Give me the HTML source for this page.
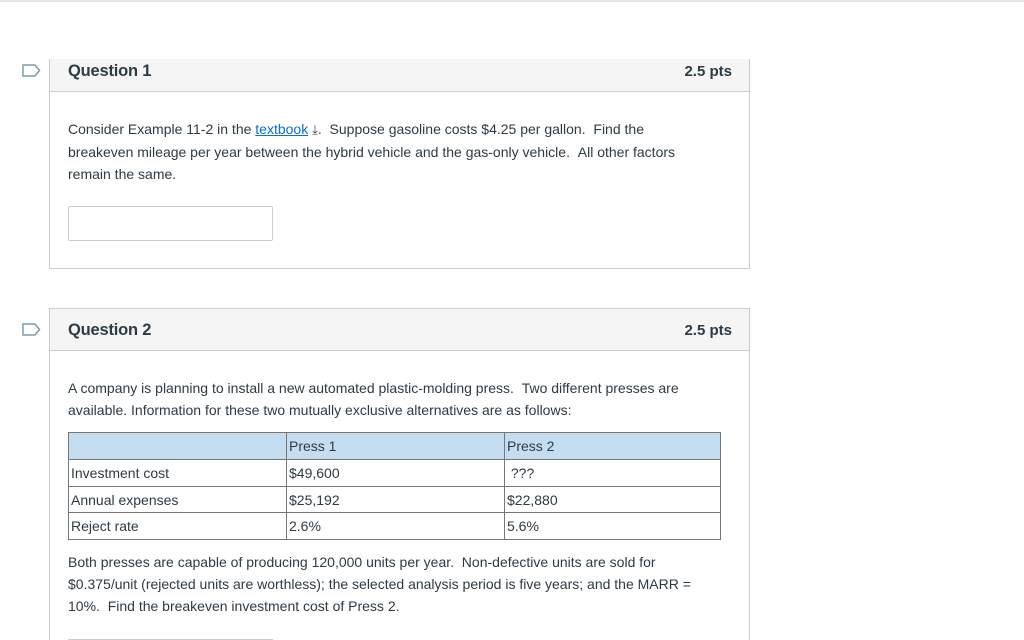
<!DOCTYPE html>
<html style="height:640px;overflow:hidden"><head><style>
body{margin:0;width:1024px;height:640px;overflow:hidden;background:#fff;font-family:"Liberation Sans",sans-serif;color:#2d3b45;position:relative}
.topline{position:absolute;left:0;top:0;width:1024px;height:2px;background:#e6e6e6}
.box{position:absolute;left:49px;width:699px;border:1px solid #c7cdd1;border-top:none}
.hdr{height:32px;background:#f5f5f5;border-bottom:1px solid #c7cdd1;position:relative}
.hdr .t{position:absolute;left:18px;top:2px;font-size:16.5px;font-weight:bold;letter-spacing:-0.2px}
.hdr .p{position:absolute;right:17px;top:3px;font-size:15px;font-weight:bold}
.txt{position:absolute;left:18px;font-size:14px;line-height:22px;white-space:nowrap}
.flag{position:absolute;left:22px;width:19px;height:13px}
a{color:#0770d6}
table{position:absolute;left:18px;border-collapse:collapse;font-size:14px}
td{border:1px solid #777;height:25px;padding:0 2px;vertical-align:middle;box-sizing:border-box}
</style></head><body>
<div class="topline"></div>
<svg class="flag" style="top:64px" viewBox="0 0 19 13"><path d="M1 1H13L17.5 6.5L13 12H1Z" fill="none" stroke="#7a9bb5" stroke-width="1.5"/></svg>
<svg class="flag" style="top:323px" viewBox="0 0 19 13"><path d="M1 1H13L17.5 6.5L13 12H1Z" fill="none" stroke="#7a9bb5" stroke-width="1.5"/></svg>
<div class="box" style="top:59px;height:209px">
 <div class="hdr"><span class="t" style="top:3px">Question 1</span><span class="p" style="top:4px">2.5 pts</span></div>
 <div class="txt" style="top:59px">Consider Example 11-2 in the <a href="#">textbook</a> <span style="font-size:13px">⤓</span>. &nbsp;Suppose gasoline costs $4.25 per gallon. &nbsp;Find the<br>breakeven mileage per year between the hybrid vehicle and the gas-only vehicle. &nbsp;All other factors<br>remain the same.</div>
 <div style="position:absolute;left:18px;top:147px;width:203px;height:33px;border:1px solid #c7cdd1;border-radius:2px"></div>
</div>
<div class="box" style="top:308px;height:331px;border-top:1px solid #c7cdd1;border-bottom:none;overflow:hidden">
 <div class="hdr" style="height:41px"><span class="t" style="top:12px">Question 2</span><span class="p" style="top:13px">2.5 pts</span></div>
 <div class="txt" style="top:68px">A company is planning to install a new automated plastic-molding press. &nbsp;Two different presses are<br>available. Information for these two mutually exclusive alternatives are as follows:</div>
 <table style="top:123px;width:653px">
  <tr style="background:#c5ddf1"><td style="width:218px;height:27px"></td><td style="width:218px">Press 1</td><td>Press 2</td></tr>
  <tr><td style="height:27px">Investment cost</td><td>$49,600</td><td>&nbsp;???</td></tr>
  <tr><td style="height:26px">Annual expenses</td><td>$25,192</td><td>$22,880</td></tr>
  <tr><td style="height:27px">Reject rate</td><td>2.6%</td><td>5.6%</td></tr>
 </table>
 <div class="txt" style="top:242px">Both presses are capable of producing 120,000 units per year. &nbsp;Non-defective units are sold for<br>$0.375/unit (rejected units are worthless); the selected analysis period is five years; and the MARR =<br>10%. &nbsp;Find the breakeven investment cost of Press 2.</div>
 <div style="position:absolute;left:18px;top:330px;width:203px;height:33px;border:1px solid #c7cdd1"></div>
</div>
</body></html>
